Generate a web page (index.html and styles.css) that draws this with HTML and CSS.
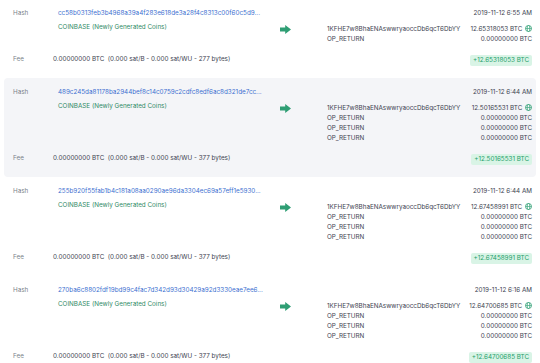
FILE: index.html
```html
<!DOCTYPE html>
<html>
<head>
    <title>Transactions</title>
    <link rel="stylesheet" href="styles.css">
</head>
<body>

<div class="txs">

    <div class="tx">
        <div class="tx-left">
            <div>
                <div class="row"><span class="label">Hash</span><a class="hash" href="#">cc58b0313feb3b4968a39a4f283e618de3a28f4c8313c00f60c5d9...</a></div>
                <div class="coinbase">COINBASE (Newly Generated Coins)</div>
            </div>
            <div class="row fee"><span class="label">Fee</span><span>0.00000000 BTC &nbsp;(0.000 sat/B - 0.000 sat/WU - 277 bytes)</span></div>
        </div>
        <div class="tx-right">
            <div class="date">2019-11-12 6:55 AM</div>
            <div class="io">
                <div class="arrow"><svg width="11" height="9" viewBox="0 0 11 9"><path d="M0 2.6h5.2V0L11 4.5 5.2 9V6.4H0z" fill="#2f9e74"/></svg></div>
                <div class="outputs">
                    <div class="out"><span>1KFHE7w8BhaENAswwryaoccDb6qcT6DbYY</span><span class="amt">12.65318053 BTC <svg class="globe" width="7" height="7" viewBox="0 0 10 10"><circle cx="5" cy="5" r="4.3" fill="none" stroke="#3aa57c" stroke-width="1.3"/><ellipse cx="5" cy="5" rx="1.8" ry="4.3" fill="none" stroke="#3aa57c" stroke-width="1"/><path d="M0.8 5h8.4" stroke="#3aa57c" stroke-width="1"/></svg></span></div>
                    <div class="out"><span>OP_RETURN</span><span class="amt">0.00000000 BTC</span></div>
                </div>
            </div>
            <div class="total"><span class="badge">+12.65318053 BTC</span></div>
        </div>
    </div>

    <div class="tx alt">
        <div class="tx-left">
            <div>
                <div class="row"><span class="label">Hash</span><a class="hash" href="#">489c245da81178ba2944bef8c14c0759c2cdfc8edf6ac8d321de7cc...</a></div>
                <div class="coinbase">COINBASE (Newly Generated Coins)</div>
            </div>
            <div class="row fee"><span class="label">Fee</span><span>0.00000000 BTC &nbsp;(0.000 sat/B - 0.000 sat/WU - 377 bytes)</span></div>
        </div>
        <div class="tx-right">
            <div class="date">2019-11-12 6:44 AM</div>
            <div class="io">
                <div class="arrow"><svg width="11" height="9" viewBox="0 0 11 9"><path d="M0 2.6h5.2V0L11 4.5 5.2 9V6.4H0z" fill="#2f9e74"/></svg></div>
                <div class="outputs">
                    <div class="out"><span>1KFHE7w8BhaENAswwryaoccDb6qcT6DbYY</span><span class="amt">12.50165531 BTC <svg class="globe" width="7" height="7" viewBox="0 0 10 10"><circle cx="5" cy="5" r="4.3" fill="none" stroke="#3aa57c" stroke-width="1.3"/><ellipse cx="5" cy="5" rx="1.8" ry="4.3" fill="none" stroke="#3aa57c" stroke-width="1"/><path d="M0.8 5h8.4" stroke="#3aa57c" stroke-width="1"/></svg></span></div>
                    <div class="out"><span>OP_RETURN</span><span class="amt">0.00000000 BTC</span></div>
                    <div class="out"><span>OP_RETURN</span><span class="amt">0.00000000 BTC</span></div>
                    <div class="out"><span>OP_RETURN</span><span class="amt">0.00000000 BTC</span></div>
                </div>
            </div>
            <div class="total"><span class="badge">+12.50165531 BTC</span></div>
        </div>
    </div>

    <div class="tx">
        <div class="tx-left">
            <div>
                <div class="row"><span class="label">Hash</span><a class="hash" href="#">255b920f55fab1b4c181a08aa0290ae96da3304ec69a57eff1e5930...</a></div>
                <div class="coinbase">COINBASE (Newly Generated Coins)</div>
            </div>
            <div class="row fee"><span class="label">Fee</span><span>0.00000000 BTC &nbsp;(0.000 sat/B - 0.000 sat/WU - 377 bytes)</span></div>
        </div>
        <div class="tx-right">
            <div class="date">2019-11-12 6:44 AM</div>
            <div class="io">
                <div class="arrow"><svg width="11" height="9" viewBox="0 0 11 9"><path d="M0 2.6h5.2V0L11 4.5 5.2 9V6.4H0z" fill="#2f9e74"/></svg></div>
                <div class="outputs">
                    <div class="out"><span>1KFHE7w8BhaENAswwryaoccDb6qcT6DbYY</span><span class="amt">12.67458991 BTC <svg class="globe" width="7" height="7" viewBox="0 0 10 10"><circle cx="5" cy="5" r="4.3" fill="none" stroke="#3aa57c" stroke-width="1.3"/><ellipse cx="5" cy="5" rx="1.8" ry="4.3" fill="none" stroke="#3aa57c" stroke-width="1"/><path d="M0.8 5h8.4" stroke="#3aa57c" stroke-width="1"/></svg></span></div>
                    <div class="out"><span>OP_RETURN</span><span class="amt">0.00000000 BTC</span></div>
                    <div class="out"><span>OP_RETURN</span><span class="amt">0.00000000 BTC</span></div>
                    <div class="out"><span>OP_RETURN</span><span class="amt">0.00000000 BTC</span></div>
                </div>
            </div>
            <div class="total"><span class="badge">+12.67458991 BTC</span></div>
        </div>
    </div>

    <div class="tx">
        <div class="tx-left">
            <div>
                <div class="row"><span class="label">Hash</span><a class="hash" href="#">270ba6c8802fdf19bd99c4fac7d342d93d30429a92d3330eae7ee6...</a></div>
                <div class="coinbase">COINBASE (Newly Generated Coins)</div>
            </div>
            <div class="row fee"><span class="label">Fee</span><span>0.00000000 BTC &nbsp;(0.000 sat/B - 0.000 sat/WU - 377 bytes)</span></div>
        </div>
        <div class="tx-right">
            <div class="date">2019-11-12 6:16 AM</div>
            <div class="io">
                <div class="arrow"><svg width="11" height="9" viewBox="0 0 11 9"><path d="M0 2.6h5.2V0L11 4.5 5.2 9V6.4H0z" fill="#2f9e74"/></svg></div>
                <div class="outputs">
                    <div class="out"><span>1KFHE7w8BhaENAswwryaoccDb6qcT6DbYY</span><span class="amt">12.64700685 BTC <svg class="globe" width="7" height="7" viewBox="0 0 10 10"><circle cx="5" cy="5" r="4.3" fill="none" stroke="#3aa57c" stroke-width="1.3"/><ellipse cx="5" cy="5" rx="1.8" ry="4.3" fill="none" stroke="#3aa57c" stroke-width="1"/><path d="M0.8 5h8.4" stroke="#3aa57c" stroke-width="1"/></svg></span></div>
                    <div class="out"><span>OP_RETURN</span><span class="amt">0.00000000 BTC</span></div>
                    <div class="out"><span>OP_RETURN</span><span class="amt">0.00000000 BTC</span></div>
                    <div class="out"><span>OP_RETURN</span><span class="amt">0.00000000 BTC</span></div>
                </div>
            </div>
            <div class="total"><span class="badge">+12.64700685 BTC</span></div>
        </div>
    </div>

</div>

</body>
</html>
```

FILE: styles.css
```css
body {
    margin: 0;
    background: #fff;
    font-family: Inter, "Noto Sans", sans-serif;
    font-size: 6.3px;
    line-height: 10px;
    color: #3d4350;
}

.txs {
    margin-top: -1px;
    padding: 0 4px;
}

.tx {
    display: flex;
    padding: 9px 4px 12px 9px;
    border-radius: 4px;
}

.tx.alt {
    background-color: #f4f5f8;
}

.tx-left {
    width: 265px;
    display: flex;
    flex-direction: column;
    justify-content: space-between;
}

.row {
    display: flex;
}

.label {
    width: 40px;
    color: #7a7f8a;
}

.hash {
    padding-left: 5px;
    color: #3c6fd0;
    text-decoration: none;
}

.coinbase {
    margin-top: 4px;
    margin-left: 45px;
    color: #2f8a66;
}

.fee {
    margin-bottom: 2px;
}

.tx-right {
    flex: 1;
}

.date {
    text-align: right;
    margin-bottom: 6px;
}

.io {
    display: flex;
}

.arrow {
    width: 47px;
    padding-left: 2px;
    padding-top: 1px;
}

.outputs {
    flex: 1;
}

.out {
    display: flex;
    justify-content: space-between;
}

.globe {
    vertical-align: -1px;
    margin-left: 1px;
}

.total {
    margin-top: 11px;
    text-align: right;
    line-height: 11px;
}

.badge {
    display: inline-block;
    padding: 0 3px;
    background-color: #d9f4e6;
    color: #23a06b;
    border-radius: 2px;
}
```
